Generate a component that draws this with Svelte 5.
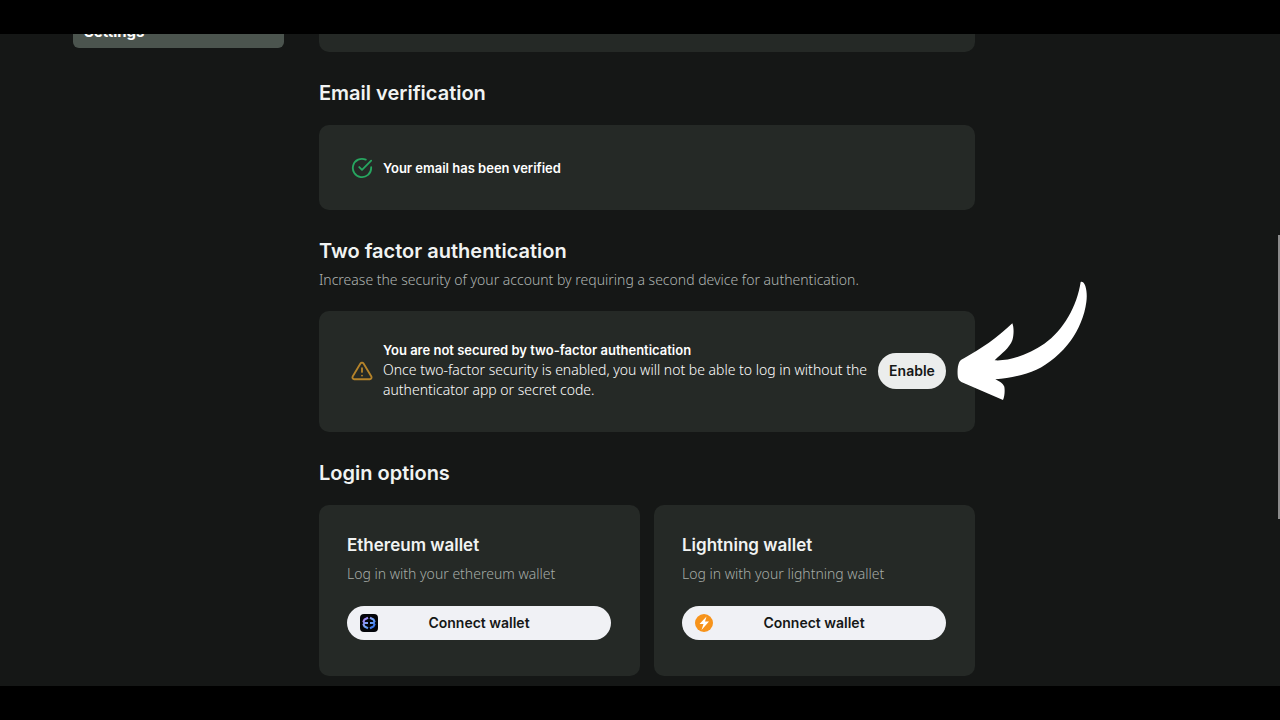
<script>
  const wallets = [
    { id: 'ethereum', title: 'Ethereum wallet', text: 'Log in with your ethereum wallet' },
    { id: 'lightning', title: 'Lightning wallet', text: 'Log in with your lightning wallet' }
  ];
</script>

<div class="frame">
  <div class="screen">
    <nav class="sidebar">
      <a class="nav-item" href="#settings" aria-current="page">Settings</a>
    </nav>

    <main class="content">
      <div class="card card-tail"></div>

      <section>
        <h2>Email verification</h2>
        <div class="card notice">
          <svg class="status ok" viewBox="0 0 24 24" aria-hidden="true">
            <path d="M22 11.1V12a10 10 0 1 1-5.9-9.1" />
            <path d="M22 4 12 14l-3-3" />
          </svg>
          <p class="message"><strong>Your email has been verified</strong></p>
        </div>
      </section>

      <section>
        <h2>Two factor authentication</h2>
        <p class="lead">Increase the security of your account by requiring a second device for authentication.</p>
        <div class="card notice tall">
          <svg class="status warn" viewBox="0 0 24 24" aria-hidden="true">
            <path d="M10.3 3.9 1.8 18a2 2 0 0 0 1.7 3h17a2 2 0 0 0 1.7-3L13.7 3.9a2 2 0 0 0-3.4 0z" />
            <path d="M12 9v4M12 17h.01" />
          </svg>
          <p class="message">
            <strong>You are not secured by two-factor authentication</strong><br />
            Once two-factor security is enabled, you will not be able to log in without the
            authenticator app or secret code.
          </p>
          <button class="enable" type="button">Enable</button>
          <svg class="arrow" viewBox="292 33 393 360" aria-hidden="true">
            <path
              d="M663 36C668 34 674 39 677 48C682 63 682 82 680 96C675 136 657 180 633 212C606 249 567 282 530 299C494 315 449 325 407 328C418 333 430 340 434 350C436 361 435 380 430 390L305 336C298 332 294 325 294 316C293 302 294 286 299 276C302 271 307 268 313 265C365 236 412 204 458 160C463 172 463 195 458 211C450 233 425 252 405 271C456 274 513 249 554 221C612 181 652 108 663 36Z"
            />
          </svg>
        </div>
      </section>

      <section>
        <h2>Login options</h2>
        <div class="wallets">
          {#each wallets as wallet (wallet.id)}
            <article class="card wallet">
              <h3>{wallet.title}</h3>
              <p>{wallet.text}</p>
              <button class="connect" type="button">
                {#if wallet.id === 'ethereum'}
                  <svg viewBox="0 0 36 36" aria-hidden="true">
                    <defs>
                      <linearGradient id="eth" gradientUnits="userSpaceOnUse" x1="6" y1="6" x2="30" y2="30">
                        <stop offset="0.1" stop-color="#a883f3" />
                        <stop offset="0.5" stop-color="#74a8f8" />
                        <stop offset="0.9" stop-color="#2f6bea" />
                      </linearGradient>
                    </defs>
                    <rect width="36" height="36" rx="8" fill="#04050a" />
                    <g fill="none" stroke="url(#eth)" stroke-width="4">
                      <path d="M16 7.500 9 11l-2 4 2 3-2 3 2 4 7 3.500M8 18h8" />
                      <path d="M20 7.500 27 11l2 4-2 3 2 3-2 4-7 3.500M28 18h-8" />
                    </g>
                  </svg>
                {:else}
                  <svg viewBox="0 0 36 36" aria-hidden="true">
                    <circle cx="18" cy="18" r="18" fill="#f7931a" />
                    <path d="M23 5 9 20h8l-4 12 15-17h-8z" fill="#fff" />
                  </svg>
                {/if}
                <span>Connect wallet</span>
              </button>
            </article>
          {/each}
        </div>
      </section>
    </main>

    <div class="scroll-thumb"></div>
  </div>
</div>

<style>
  :global(body) {
    margin: 0;
    background: #000;
  }

  .frame {
    box-sizing: border-box;
    height: 100vh;
    padding: 34px 0;
    background: #000;
    font-family: Inter, 'Liberation Sans', sans-serif;
    font-size: 14px;
    line-height: 20px;
    color: #f1f3f2;
  }

  .screen {
    position: relative;
    display: grid;
    grid-template-columns: 211px minmax(0, 656px);
    column-gap: 35px;
    align-items: start;
    box-sizing: border-box;
    height: 100%;
    padding: 0 73px;
    overflow: hidden;
    background: #151716;
  }

  .nav-item {
    display: block;
    margin-top: -18px;
    padding: 6px 11px;
    border-radius: 6px;
    background: #4b544e;
    color: #fff;
    font-size: 15px;
    font-weight: 700;
    text-decoration: none;
  }

  .content {
    display: flex;
    flex-direction: column;
    gap: 27px;
  }

  h2,
  h3,
  p {
    margin: 0;
  }

  p {
    font-family: 'Noto Sans', sans-serif;
    font-weight: 300;
  }

  h2 {
    font-size: 20px;
    font-weight: 600;
    line-height: 28px;
  }

  .card {
    border-radius: 10px;
    background: #252926;
  }

  .card-tail {
    height: 18px;
    border-radius: 0 0 10px 10px;
  }

  h2 + .card,
  .wallets {
    margin-top: 18px;
  }

  .lead {
    margin-top: 5px;
    color: #afb5b2;
  }

  .lead + .card {
    margin-top: 21px;
  }

  .notice {
    position: relative;
    display: flex;
    align-items: center;
    padding: 32px 29px 31px 32px;
  }

  .notice.tall {
    padding-top: 29px;
    padding-bottom: 30px;
  }

  .status {
    flex: none;
    width: 22px;
    height: 22px;
    margin-right: 10px;
    fill: none;
    stroke-width: 2;
    stroke-linecap: round;
    stroke-linejoin: round;
  }

  .ok {
    stroke: #27a660;
  }

  .warn {
    stroke: #b5832a;
  }

  .message {
    flex: 1;
    color: #fff;
  }

  .tall .message {
    padding-bottom: 2px;
  }

  strong {
    font-family: Inter, 'Liberation Sans', sans-serif;
    font-size: 13px;
    font-weight: 600;
  }

  button {
    border: 0;
    border-radius: 18px;
    font: inherit;
    font-weight: 600;
    color: #151716;
    cursor: pointer;
  }

  .enable {
    flex: none;
    width: 68px;
    height: 36px;
    padding: 0;
    background: #ebedec;
  }

  .arrow {
    position: absolute;
    top: -30px;
    left: calc(100% - 18px);
    width: 131px;
    height: 120px;
    fill: #fff;
  }

  .wallets {
    display: grid;
    grid-template-columns: 1fr 1fr;
    gap: 14px;
  }

  .wallet {
    padding: 28px 29px 36px 28px;
  }

  h3 {
    font-size: 17px;
    font-weight: 600;
    line-height: 24px;
  }

  .wallet p {
    margin-top: 7px;
    color: #a5aca7;
  }

  .connect {
    display: grid;
    grid-template-columns: 18px 1fr 18px;
    align-items: center;
    width: 100%;
    height: 34px;
    margin-top: 22px;
    padding: 0 13px;
    background: #f0f1f5;
  }

  .connect svg {
    width: 18px;
    height: 18px;
  }

  .scroll-thumb {
    position: absolute;
    top: 201px;
    right: 0;
    width: 2px;
    height: 284px;
    background: #8c8c8c;
  }
</style>
